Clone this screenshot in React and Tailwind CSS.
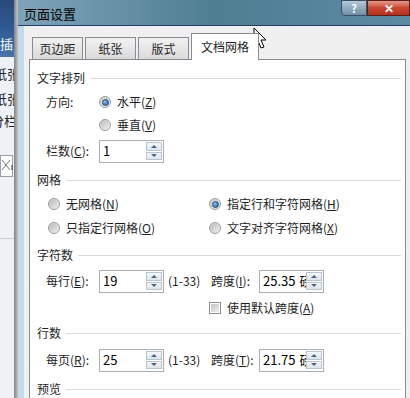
import React from 'react'

const font = { fontFamily: '"Noto Sans CJK SC", "Microsoft YaHei", sans-serif' }

const Radio = ({ checked }) => (
  <span className="w-[12px] h-[12px] rounded-full border border-[#9a9a9a] bg-gradient-to-br from-[#c9c9c9] to-[#f4f4f4] flex items-center justify-center shrink-0">
    {checked ? (
      <span className="w-[7px] h-[7px] rounded-full bg-[radial-gradient(circle_at_35%_35%,#8fc0ea,#1d5a99)] border border-[#174a82]" />
    ) : (
      <span className="w-[8px] h-[8px] rounded-full bg-gradient-to-br from-[#bdbdbd] to-[#ececec]" />
    )}
  </span>
)

const Spin = () => (
  <div className="flex flex-col w-[16px] h-[18px] gap-[1px] shrink-0">
    <div className="flex-1 border border-[#b8c4d0] bg-gradient-to-b from-[#f4f7fa] to-[#dde5ec] flex items-center justify-center">
      <svg width="6" height="3" viewBox="0 0 6 3"><path d="M0 3 L3 0 L6 3 Z" fill="#4d6185" /></svg>
    </div>
    <div className="flex-1 border border-[#b8c4d0] bg-gradient-to-b from-[#f4f7fa] to-[#dde5ec] flex items-center justify-center">
      <svg width="6" height="3" viewBox="0 0 6 3"><path d="M0 0 L3 3 L6 0 Z" fill="#4d6185" /></svg>
    </div>
  </div>
)

const Input = ({ value, cut }) => (
  <div className="w-[65px] h-[23px] border border-[#abadb3] bg-white flex items-center pl-[3px] pr-[1px] text-[13px] text-black overflow-hidden">
    <span className="flex-1 whitespace-nowrap overflow-hidden">{value}{cut && <span className="ml-[4px]">磅</span>}</span>
    <Spin />
  </div>
)

const Header = ({ children }) => (
  <div className="flex items-center h-full">
    <span>{children}</span>
    <div className="flex-1 h-px bg-[#d8dde2] ml-[5px]" />
  </div>
)

const Tab = ({ children }) => (
  <div className="w-[51px] h-[22px] mt-[4px] border border-[#898c95] border-b-0 bg-gradient-to-b from-[#f2f2f2] to-[#dadada] flex items-center justify-center text-[12px]">
    {children}
  </div>
)

const App = () => {
  return (
    <div className="w-[410px] h-[398px] relative overflow-hidden flex text-[12px] text-[#1e1e1e]" style={font}>
      {/* word window behind */}
      <div className="w-[14px] flex flex-col shrink-0 bg-[#eef1f5] overflow-hidden">
        <div className="h-[57px] bg-gradient-to-b from-[#2a4a78] via-[#2f5a92] to-[#4b73a8] relative">
          <span className="absolute left-0 top-[34px] text-white text-[13px] whitespace-nowrap">插入</span>
        </div>
        <div className="flex flex-col text-[13px] text-[#222] whitespace-nowrap">
          <span className="h-[25px] mt-[4px] -ml-[6px] leading-[25px]">纸张</span>
          <span className="h-[25px] -ml-[6px] leading-[25px]">纸张</span>
          <span className="h-[22px] -ml-[9px] leading-[20px]">分栏</span>
          <div className="mt-[22px] w-[13px] h-[22px] border border-[#9aa0a8] bg-white">
            <svg width="13" height="22" viewBox="0 0 13 22"><path d="M1 4 L9 14 M9 4 L1 14" stroke="#777" strokeWidth="1" /><path d="M11 9 V14" stroke="#333" /></svg>
          </div>
          <div className="mt-[61px] h-px w-full bg-[#c8ccd2]" />
        </div>
      </div>
      <div className="w-[4px] shrink-0 bg-gradient-to-r from-[#7e8286] to-[#c4c7ca]" />

      {/* dialog */}
      <div className="flex-1 flex flex-col">
        <div className="h-[26px] shrink-0 border-b border-[#24406a] bg-gradient-to-r from-[#7ea3ba] via-[#4f7e93] to-[#5c8aa2] flex items-start relative">
          <span className="ml-[6px] mt-[4px] text-[13px] text-black">页面设置</span>
          <div className="ml-auto flex h-[16px]">
            <div className="w-[26px] h-full border border-[#3b4f63] rounded-bl-[4px] bg-gradient-to-b from-[#b5c9d8] to-[#6f8ea6] flex items-center justify-center text-white text-[11px] font-bold">?</div>
            <div className="w-[43px] h-full border border-[#5a1f18] bg-gradient-to-b from-[#e69a8c] via-[#c8452f] to-[#b5321c] flex items-center justify-center text-white text-[12px] font-bold">✕</div>
          </div>
        </div>
        <div className="flex-1 flex">
          <div className="w-[6px] shrink-0 bg-[#c2dbe7]" />
          <div className="flex-1 bg-[#f0f0f0] pl-[5px] pr-[4px] pt-[7px] flex flex-col">
            <div className="flex gap-[2px] pl-[3px] relative z-10">
              <Tab>页边距</Tab>
              <Tab>纸张</Tab>
              <Tab>版式</Tab>
              <div className="w-[68px] h-[27px] -mb-px border border-[#898c95] border-b-0 bg-white flex items-center justify-center text-[12px]">文档网格</div>
            </div>
            <div className="flex-1 border border-[#898c95] bg-white pt-[6px] pl-[7px] pr-[4px] flex flex-col">
              <div className="h-[24px]"><Header>文字排列</Header></div>
              <div className="h-[24px] flex items-center">
                <span className="w-[62px] pl-[9px]">方向:</span>
                <Radio checked />
                <span className="ml-[6px]">水平(<u>Z</u>)</span>
              </div>
              <div className="h-[22px] flex items-center">
                <span className="w-[62px]" />
                <Radio />
                <span className="ml-[6px]">垂直(<u>V</u>)</span>
              </div>
              <div className="h-[30px] flex items-center">
                <span className="w-[62px] pl-[9px]">栏数(<u>C</u>):</span>
                <Input value="1" />
              </div>
              <div className="h-[28px]"><Header>网格</Header></div>
              <div className="h-[20px] flex items-center">
                <div className="w-[172px] pl-[11px] flex items-center"><Radio /><span className="ml-[6px]">无网格(<u>N</u>)</span></div>
                <Radio checked /><span className="ml-[6px]">指定行和字符网格(<u>H</u>)</span>
              </div>
              <div className="h-[28px] flex items-center">
                <div className="w-[172px] pl-[11px] flex items-center"><Radio /><span className="ml-[6px]">只指定行网格(<u>O</u>)</span></div>
                <Radio /><span className="ml-[6px]">文字对齐字符网格(<u>X</u>)</span>
              </div>
              <div className="h-[26px]"><Header>字符数</Header></div>
              <div className="h-[26px] flex items-center">
                <span className="w-[62px] pl-[9px]">每行(<u>E</u>):</span>
                <Input value="19" />
                <span className="ml-[4px] w-[43px]">(1-33)</span>
                <span className="w-[48px]">跨度(<u>I</u>):</span>
                <Input value="25.35" cut />
              </div>
              <div className="h-[28px] flex items-center">
                <span className="w-[172px]" />
                <span className="w-[12px] h-[12px] border border-[#8e8f8f] bg-white flex items-center justify-center"><span className="w-[8px] h-[8px] bg-gradient-to-br from-[#c4c4c4] to-[#eeeeee]" /></span>
                <span className="ml-[6px]">使用默认跨度(<u>A</u>)</span>
              </div>
              <div className="h-[22px]"><Header>行数</Header></div>
              <div className="h-[32px] flex items-center">
                <span className="w-[62px] pl-[9px]">每页(<u>R</u>):</span>
                <Input value="25" />
                <span className="ml-[4px] w-[43px]">(1-33)</span>
                <span className="w-[48px]">跨度(<u>T</u>):</span>
                <Input value="21.75" cut />
              </div>
              <div className="h-[26px]"><Header>预览</Header></div>
            </div>
          </div>
        </div>
      </div>

      {/* mouse pointer */}
      <svg className="absolute left-[253px] top-[27px]" width="18" height="24" viewBox="0 0 18 24">
        <path d="M1 1 L1 18 L5 14 L8 21 L11 20 L8 13 L13 13 Z" fill="#fff" stroke="#000" strokeWidth="1" strokeLinejoin="round" />
      </svg>
    </div>
  )
}

export default App
